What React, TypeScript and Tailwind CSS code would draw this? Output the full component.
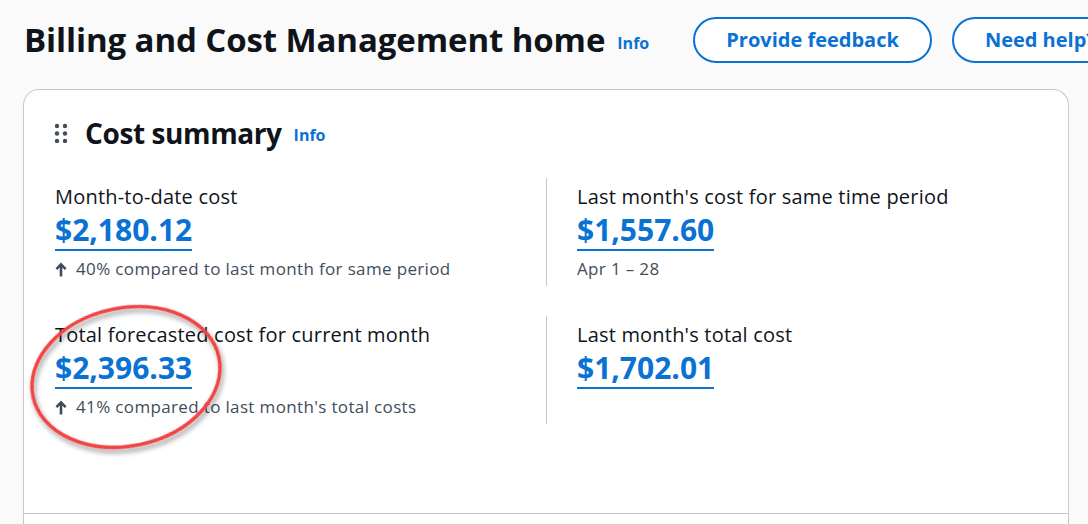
import { useState } from "react";

type Metric = {
  label: string;
  amount: string;
  note?: string;
  trend?: boolean;
};

const rows: Metric[][] = [
  [
    { label: "Month-to-date cost", amount: "$2,180.12", note: "40% compared to last month for same period", trend: true },
    { label: "Last month's cost for same time period", amount: "$1,557.60", note: "Apr 1 – 28" },
  ],
  [
    { label: "Total forecasted cost for current month", amount: "$2,396.33", note: "41% compared to last month's total costs", trend: true },
    { label: "Last month's total cost", amount: "$1,702.01" },
  ],
];

function ArrowUp() {
  return (
    <svg width="12" height="15" viewBox="0 0 12 15" className="mr-[9px] shrink-0">
      <path d="M6 0.5 L11.5 6.3 L9.8 8 L7.3 5.4 V14.5 H4.7 V5.4 L2.2 8 L0.5 6.3 Z" fill="#414d5c" />
    </svg>
  );
}

function DragHandle() {
  const dots = [0, 1, 2];
  return (
    <svg width="14" height="20" viewBox="0 0 14 20" className="shrink-0">
      {dots.map((r) => (
        <g key={r}>
          <circle cx="3" cy={3 + r * 7.5} r="2.2" fill="#414d5c" />
          <circle cx="11" cy={3 + r * 7.5} r="2.2" fill="#414d5c" />
        </g>
      ))}
    </svg>
  );
}

function MetricCell({ m }: { m: Metric }) {
  return (
    <div className="flex flex-col items-start">
      <div className="text-[20px] leading-[26px] tracking-[0.2px] text-[#0f141a]">{m.label}</div>
      <a className="mt-[2px] text-[30px] font-bold leading-[36px] text-[#0972d3] border-b-2 border-[#0972d3] pb-[1px]">
        {m.amount}
      </a>
      {m.note && (
        <div className="mt-[8px] flex items-center text-[17px] leading-5 tracking-[0.35px] text-[#414d5c]">
          {m.trend && <ArrowUp />}
          {m.note}
        </div>
      )}
    </div>
  );
}

export default function App() {
  const [hover, setHover] = useState<string | null>(null);

  return (
    <div className="relative h-[524px] w-[1088px] overflow-hidden bg-[#fafafa] font-['Open_Sans',sans-serif] whitespace-nowrap">
      {/* encabezado */}
      <header className="flex h-[89px] items-start pl-6 pt-[17px]">
        <h1 className="text-[33px] font-bold leading-[46px] tracking-[-0.1px] text-[#0f141a]">
          Billing and Cost Management home
        </h1>
        <a className="ml-[12px] mt-[14px] text-[16px] font-bold leading-6 text-[#0972d3]">Info</a>
        <div className="ml-[44px] flex gap-5">
          {["Provide feedback", "Need help?"].map((b) => (
            <button
              key={b}
              onMouseEnter={() => setHover(b)}
              onMouseLeave={() => setHover(null)}
              className={`h-[46px] rounded-full border-2 border-[#0972d3] px-[31px] text-[20px] font-bold text-[#0972d3] ${
                hover === b ? "bg-[#f2f8fd]" : "bg-white"
              }`}
            >
              {b}
            </button>
          ))}
        </div>
      </header>

      {/* tarjeta */}
      <section className="ml-[23px] w-[1046px] rounded-t-[16px] border border-b-0 border-[#c6c6cd] bg-white">
        <div className="flex items-center pl-[30px] pt-[25px]">
          <DragHandle />
          <h2 className="ml-[17px] text-[28px] font-bold leading-9 tracking-[-0.4px] text-[#0f141a]">Cost summary</h2>
          <a className="ml-[12px] mt-[4px] text-[16px] font-bold text-[#0972d3]">Info</a>
        </div>

        <div className="flex flex-col gap-[30px] pl-[31px] pt-[27px] pb-[89px]">
          {rows.map((row, i) => (
            <div key={i} className="flex">
              <div className="w-[491px] pt-[6px]">
                <MetricCell m={row[0]} />
              </div>
              <div className="h-[108px] border-l border-[#c6c6cd] pl-[30px] pt-[6px]">
                <MetricCell m={row[1]} />
              </div>
            </div>
          ))}
        </div>

        <div className="h-[20px] border-t border-[#c6c6cd]" />
      </section>

      {/* anotación */}
      <svg
        className="pointer-events-none absolute left-0 top-0"
        width="300"
        height="480"
        viewBox="0 0 300 480"
      >
        <defs>
          <filter id="sh" x="-20%" y="-20%" width="140%" height="140%">
            <feDropShadow dx="1" dy="4" stdDeviation="2.5" floodColor="#000" floodOpacity="0.4" />
          </filter>
        </defs>
        <ellipse
          cx="126"
          cy="377"
          rx="95"
          ry="69"
          transform="rotate(-12 126 377)"
          fill="none"
          stroke="#ef4444"
          strokeWidth="3.5"
          filter="url(#sh)"
        />
      </svg>
    </div>
  );
}
